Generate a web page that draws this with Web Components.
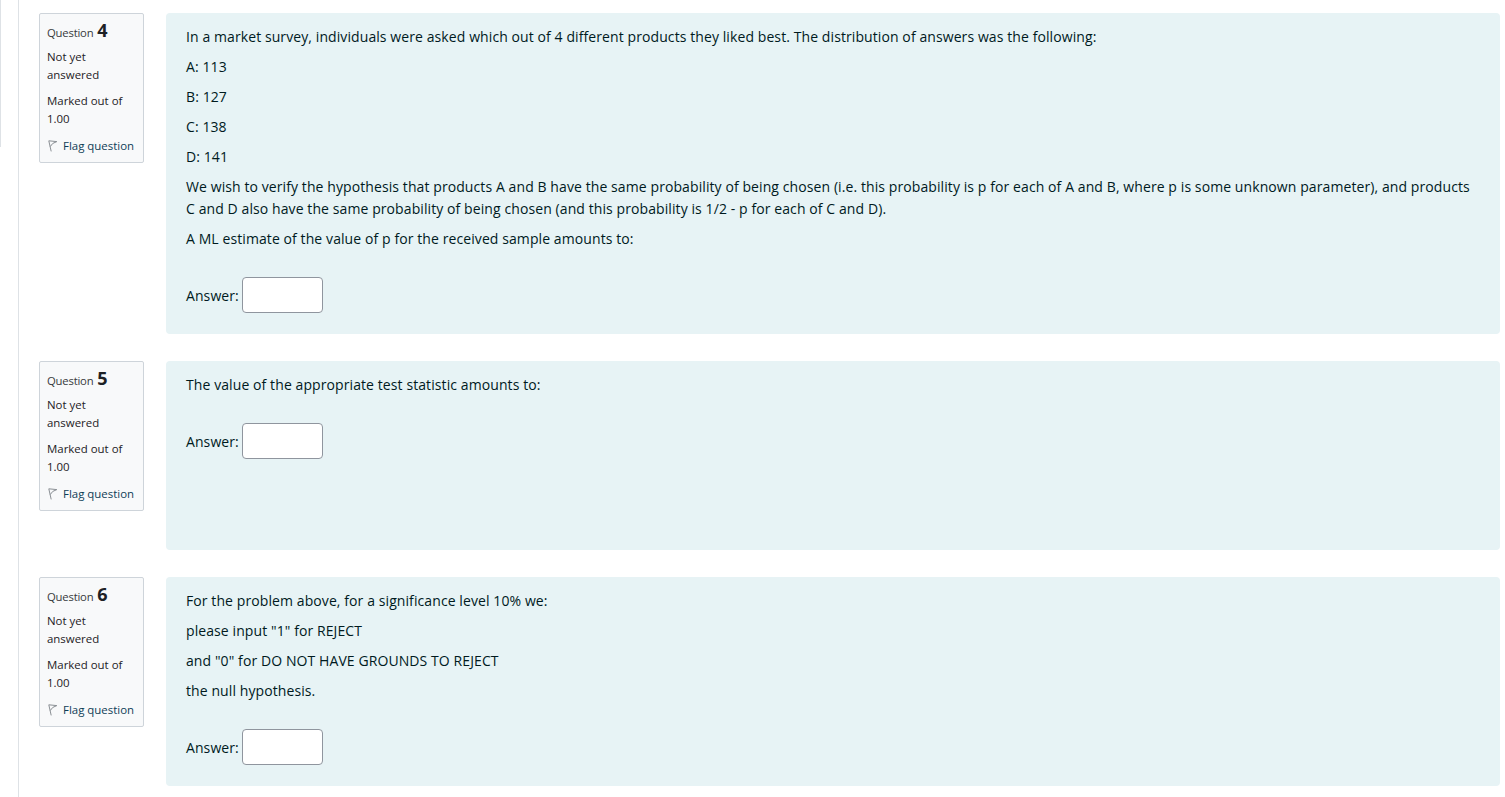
<!DOCTYPE html>
<html lang="en">
<head>
<meta charset="utf-8">
<title>Quiz</title>
<style>
html, body { margin: 0; background: #fff; }
body { font-family: "Open Sans", "Noto Sans", sans-serif; color: #001a1e; }
</style>
</head>
<body>
<quiz-page>
   <quiz-question number="4">
      <p>In a market survey, individuals were asked which out of 4 different products they liked best. The distribution of answers was the following:</p>
      <p>A: 113</p>
      <p>B: 127</p>
      <p>C: 138</p>
      <p>D: 141</p>
      <p>We wish to verify the hypothesis that products A and B have the same probability of being chosen (i.e. this probability is p for each of A and B, where p is some unknown parameter), and products C and D also have the same probability of being chosen (and this probability is 1/2 - p for each of C and D).</p>
      <p>A ML estimate of the value of p for the received sample amounts to:</p>
   </quiz-question>
   <quiz-question number="5">
      <p>The value of the appropriate test statistic amounts to:</p>
   </quiz-question>
   <quiz-question number="6">
      <p>For the problem above, for a significance level 10% we:</p>
      <p>please input "1" for REJECT</p>
      <p>and "0" for DO NOT HAVE GROUNDS TO REJECT</p>
      <p>the null hypothesis.</p>
   </quiz-question>
</quiz-page>
<script>
class QuizPage extends HTMLElement {
   constructor() {
      super();
      this.attachShadow({ mode: 'open' });
   }
   connectedCallback() {
      this.shadowRoot.innerHTML = /*html*/ `
      <style>
      :host { display: block; height: 797px; overflow: hidden; position: relative; }
      .drawer {
         position: absolute; left: 0; top: 0; width: 1px; height: 147px;
         background: #dee2e6;
      }
      main {
         margin-left: 18px;
         height: 100%;
         box-sizing: border-box;
         border-left: 1px solid #dee2e6;
         padding: 13px 5px 0 20px;
         display: flex;
         flex-direction: column;
         gap: 27px;
      }
      </style>
      <div class="drawer"></div>
      <main><slot></slot></main>
      `;
   }
}

class QuizInfo extends HTMLElement {
   constructor() {
      super();
      this.attachShadow({ mode: 'open' });
   }
   connectedCallback() {
      this.shadowRoot.innerHTML = /*html*/ `
      <style>
      :host {
         display: block;
         box-sizing: border-box;
         width: 105px;
         height: 150px;
         padding: 4px 7px 0 7px;
         background: #f8f9fa;
         border: 1px solid #ced4da;
         border-radius: 2px;
         font-size: 11.45px;
         line-height: 18px;
         color: #1d2125;
      }
      .title { height: 24px; line-height: 24px; margin-bottom: 6px; white-space: nowrap; font-size: 11.3px; letter-spacing: -0.2px; color: #373a3c; }
      .title b { font-size: 18px; font-weight: 700; color: #1d2125; letter-spacing: 0; margin-left: 1px; }
      .state { margin-bottom: 8px; }
      .grade { margin-bottom: 9px; }
      .flag { display: flex; align-items: center; gap: 6px; white-space: nowrap; color: #0f3d57; }
      svg { display: block; flex: none; margin-left: 1px; margin-right: -1px; }
      </style>
      <div class="title">Question <b>${this.getAttribute('number')}</b></div>
      <div class="state">Not yet answered</div>
      <div class="grade">Marked out of 1.00</div>
      <div class="flag">
         <svg width="10" height="12" viewBox="0 0 10 12" fill="none" stroke="#8a8f94" stroke-width="1">
            <path d="M0.8 0.8 L3.2 11.4 M0.8 0.8 L8.8 1.6 L4.8 3.4 L2.2 6.6"/>
         </svg>
         <span>Flag question</span>
      </div>
      `;
   }
}

class QuizAnswer extends HTMLElement {
   constructor() {
      super();
      this.attachShadow({ mode: 'open' });
   }
   connectedCallback() {
      this.shadowRoot.innerHTML = /*html*/ `
      <style>
      :host { display: flex; align-items: center; gap: 3px; }
      label { font: inherit; position: relative; top: 1px; }
      input {
         box-sizing: border-box;
         width: 81px;
         height: 36px;
         margin: 0;
         padding: 0 8px;
         background: #fff;
         border: 1px solid #8f959e;
         border-radius: 4px;
      }
      </style>
      <label for="a">Answer:</label>
      <input id="a" type="text">
      `;
   }
}

class QuizQuestion extends HTMLElement {
   constructor() {
      super();
      this.attachShadow({ mode: 'open' });
   }
   connectedCallback() {
      this.shadowRoot.innerHTML = /*html*/ `
      <style>
      :host {
         display: flex;
         align-items: flex-start;
         gap: 22px;
         flex: none;
      }
      .content {
         flex: 1;
         min-width: 0;
         box-sizing: border-box;
         min-height: 189px;
         padding: 13px 20px 21px 20px;
         background: #e7f3f5;
         border-radius: 4px;
         font-size: 14px;
         line-height: 22px;
         letter-spacing: 0.09px;
      }
      ::slotted(p) { margin: 0 0 8px 0; }
      quiz-answer { margin-top: 27px; }
      </style>
      <quiz-info number="${this.getAttribute('number')}"></quiz-info>
      <div class="content">
         <slot></slot>
         <quiz-answer></quiz-answer>
      </div>
      `;
   }
}

window.customElements.define("quiz-page", QuizPage);
window.customElements.define("quiz-info", QuizInfo);
window.customElements.define("quiz-answer", QuizAnswer);
window.customElements.define("quiz-question", QuizQuestion);
</script>
</body>
</html>
